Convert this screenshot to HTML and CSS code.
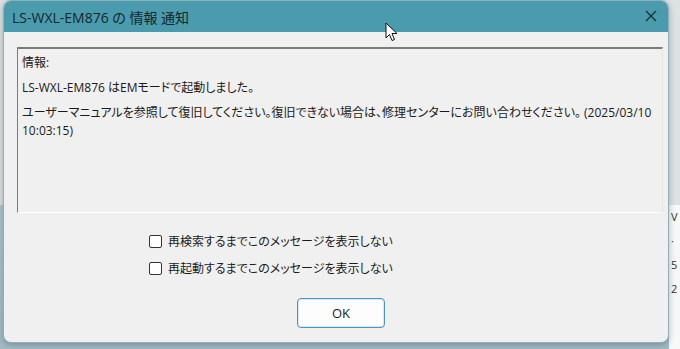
FILE: index.html
```html
<!DOCTYPE html>
<html lang="ja">
<head>
  <meta charset="UTF-8">
  <title>LS-WXL-EM876 の 情報 通知</title>
  <link rel="stylesheet" href="styles.css">
</head>
<body>
  <div class="behind">
    <span>V</span>
    <span>·</span>
    <span>5</span>
    <span>2</span>
  </div>

  <div class="dialog">
    <div class="titlebar">
      <span class="title">LS-WXL-EM876 の 情報 通知</span>
      <svg class="close" width="12" height="12" viewBox="0 0 12 12">
        <path d="M1 1 L11 11 M11 1 L1 11" stroke="#1c2a2e" stroke-width="1.2" fill="none"/>
      </svg>
    </div>

    <div class="content">
      <div class="msgbox">
        <p>情報:</p>
        <p>LS-WXL-EM876 はEMモードで起動しました。</p>
        <p>ユーザーマニュアルを参照して復旧してください。復旧できない場合は、修理センターにお問い合わせください。 (2025/03/10<br>10:03:15)</p>
      </div>

      <div class="options">
        <label class="check"><span class="box"></span>再検索するまでこのメッセージを表示しない</label>
        <label class="check"><span class="box"></span>再起動するまでこのメッセージを表示しない</label>
      </div>

      <div class="actions">
        <button class="ok">OK</button>
      </div>
    </div>
  </div>

  <!-- mouse pointer -->
  <svg class="cursor" width="14" height="21" viewBox="0 0 14 21">
    <path d="M1 1 L1 16 L4.5 12.5 L7 18.5 L9.5 17.5 L7 11.5 L12 11.5 Z" fill="#fff" stroke="#111" stroke-width="1" stroke-linejoin="round"/>
  </svg>
</body>
</html>
```

FILE: styles.css
```css
body {
  margin: 0;
  width: 680px;
  height: 349px;
  overflow: hidden;
  position: relative;
  font-family: "Open Sans", "Noto Sans CJK JP", sans-serif;
  background: linear-gradient(to bottom, #dde2e3 0, #dde2e3 205px, #b0c7cd 205px, #a3bcc3 100%);
  color: #1a1a1a;
}
.behind {
  position: absolute;
  right: 0;
  top: 205px;
  width: 9px;
  height: 144px;
  background: #f7f8f8;
  font-size: 11px;
  display: flex;
  flex-direction: column;
  gap: 9px;
  padding-top: 4px;
  padding-left: 2px;
  color: #333;
}
.dialog {
  position: absolute;
  left: 3px;
  top: 0;
  width: 664px;
  height: 341px;
  background: #f0f0f0;
  border: 1px solid #8fb0b8;
  border-radius: 8px;
  box-shadow: 0 2px 6px rgba(40, 60, 70, 0.35);
  overflow: hidden;
}
.titlebar {
  height: 31px;
  background: #4b9bae;
  display: flex;
  align-items: center;
  justify-content: space-between;
  padding: 0 11px 0 8px;
}
.title {
  font-size: 14px;
  color: #15262b;
  font-feature-settings: "palt";
}
.close {
  margin-top: -1px;
}
.content {
  padding: 15px 0 0 13px;
}
.msgbox {
  width: 640px;
  height: 158px;
  border-top: 2px solid #7b7b7b;
  border-left: 1px solid #7b7b7b;
  border-right: 1px solid #e4e4e4;
  border-bottom: 1px solid #ffffff;
  padding: 5px 0 0 4px;
  font-size: 12px;
  line-height: 18px;
  font-feature-settings: "palt";
}
.msgbox p {
  margin: 0 0 7px;
  white-space: nowrap;
}
.options {
  padding: 19px 0 0 132px;
  display: flex;
  flex-direction: column;
  gap: 9px;
}
.check {
  display: flex;
  align-items: center;
  gap: 6px;
  height: 18px;
  font-size: 12px;
  font-feature-settings: "palt";
}
.box {
  width: 11px;
  height: 11px;
  border: 1px solid #333;
  border-radius: 2px;
  background: #fff;
}
.actions {
  padding: 21px 0 0 280px;
}
.ok {
  width: 88px;
  height: 30px;
  background: #fdfdfd;
  border: 1px solid #4f94c0;
  border-radius: 4px;
  box-shadow: inset 0 0 0 1px #d6e8f3;
  font-family: "Open Sans", sans-serif;
  font-size: 13px;
  color: #1a1a1a;
}
.cursor {
  position: absolute;
  left: 385px;
  top: 22px;
}
```
